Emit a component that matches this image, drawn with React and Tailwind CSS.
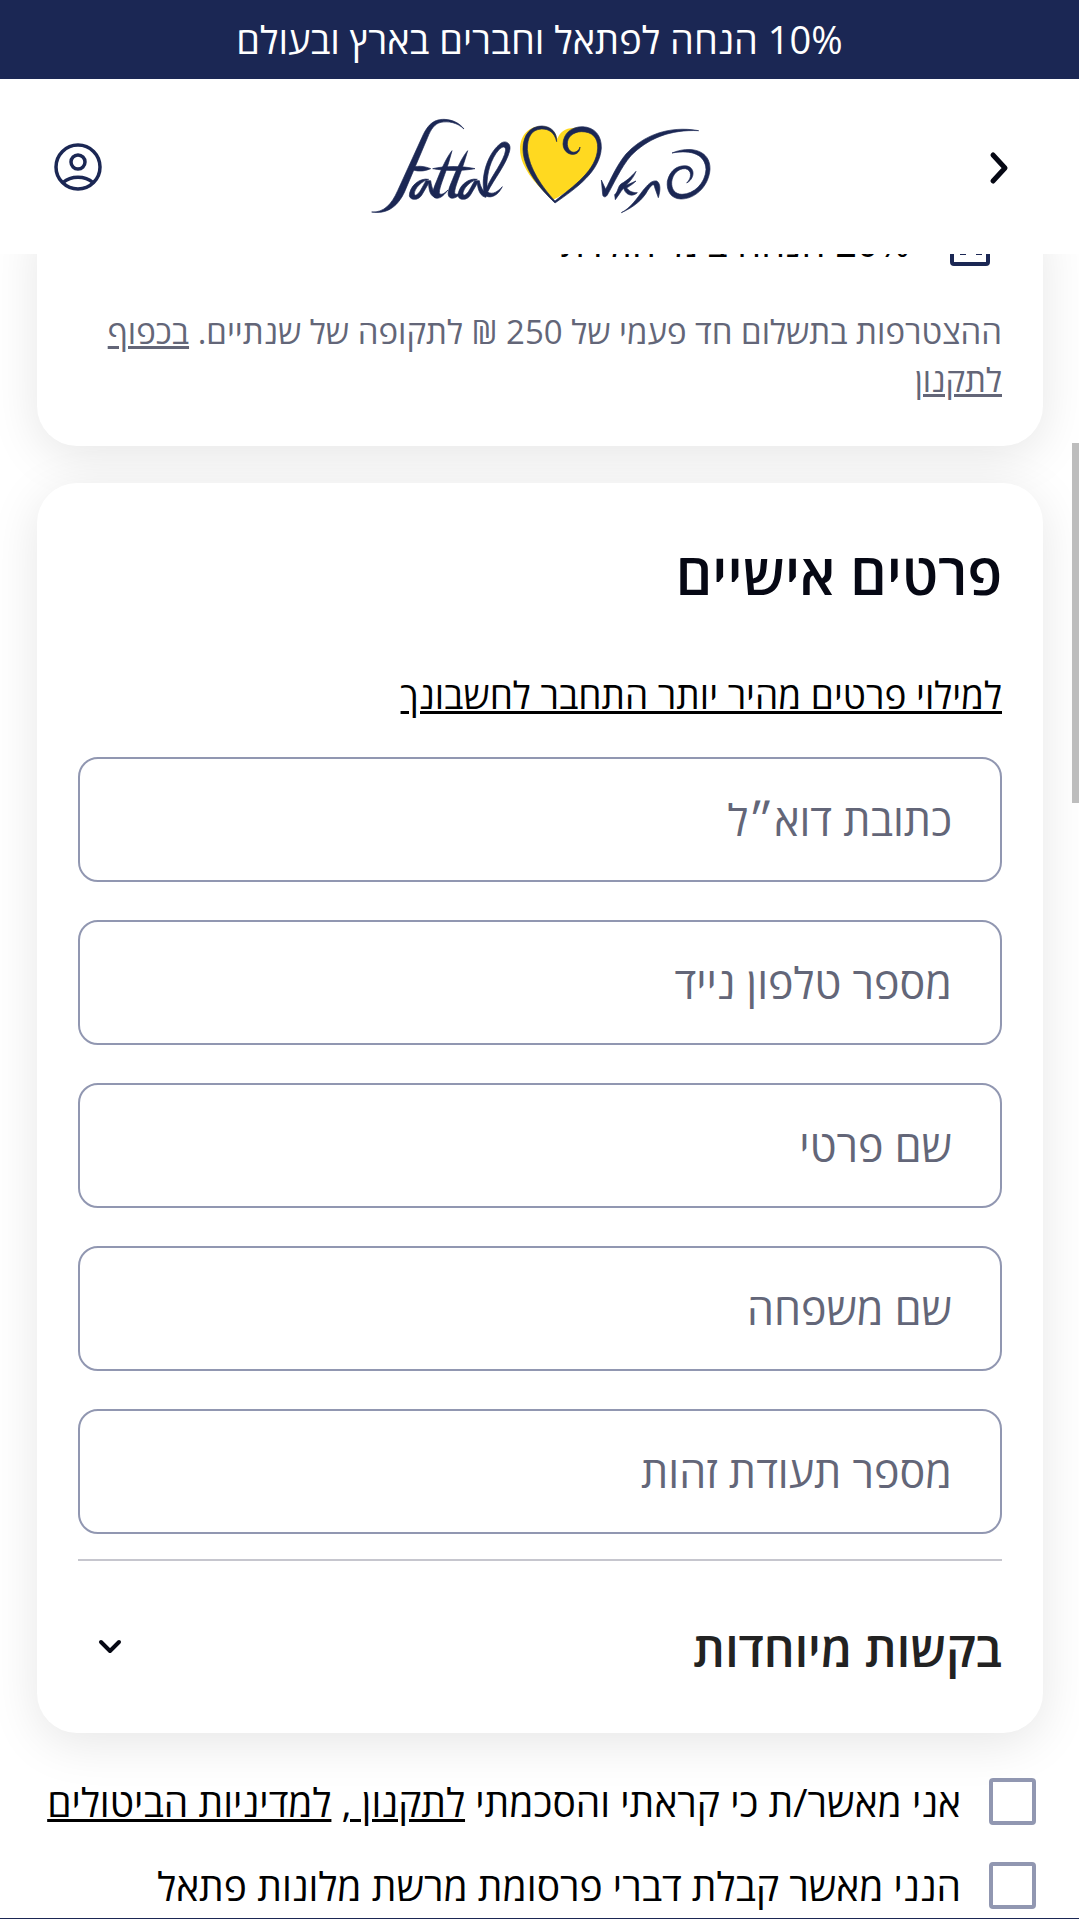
import React from "react";

const fields = [
  { id: "email", label: "כתובת דוא״ל", type: "email" },
  { id: "phone", label: "מספר טלפון נייד", type: "tel" },
  { id: "first", label: "שם פרטי", type: "text" },
  { id: "last", label: "שם משפחה", type: "text" },
  { id: "idnum", label: "מספר תעודת זהות", type: "text" },
];

function Logo() {
  return (
    <svg viewBox="0 0 1080 390" className="w-[360px]" role="img" aria-label="Fattal">
      <path
        fill="#ffd920"
        d="M578 300C536 262 480 205 480 148C480 104 508 78 545 78C572 79 588 96 592 116C600 97 615 84 640 84C692 76 720 102 718 146C714 206 652 262 578 300Z"
      />
      <g fill="#1b2754" stroke="#1b2754" strokeWidth="2" strokeLinejoin="round">
        <path d="M312 87C290 67 266 63 243 67C224 71 213 87 203 112L134 275C112 323 78 343 35 336C70 338 94 315 113 272L186 112C205 68 226 58 252 58C278 59 298 69 312 87Z" />
        <path d="M150 206C170 195 192 198 212 206C192 215 170 216 150 206Z" />
        <path d="M218 206C255 197 310 198 345 206C310 213 255 213 218 206Z" />
        <path d="M276 152C260 172 245 205 232 238C222 262 212 285 224 293C238 299 250 288 264 270C250 284 240 286 238 278C238 262 252 232 262 200C268 182 272 166 276 152Z" />
        <path d="M323 152C306 172 291 205 278 238C268 262 258 285 270 293C284 299 296 288 310 270C296 284 286 286 284 278C284 262 298 232 308 200C314 182 319 166 323 152Z" />
        <path d="M206 238C178 232 148 260 148 288C152 302 176 302 186 284L206 250C206 272 212 290 226 292L226 280C216 270 214 252 212 242L198 242C188 258 178 284 166 286C156 282 172 248 206 238Z" />
        <path d="M352 238C324 232 294 260 294 288C298 302 322 302 332 284L352 250C354 272 362 290 378 292L380 280C364 270 360 252 358 242L344 242C334 258 324 284 312 286C302 282 318 248 352 238Z" />
        <path d="M372 276C362 225 385 155 425 128C442 120 454 134 449 152C440 192 400 240 383 276C398 286 414 274 427 260C414 286 394 296 378 288C374 286 372 282 372 276ZM381 262C394 228 432 184 437 150C436 136 426 140 416 150C392 178 380 220 381 262Z" />
        <path d="M590 125C584 98 566 86 544 87C514 89 502 112 502 148C506 204 548 264 585 303C640 258 710 212 713 144C714 112 696 95 664 95C638 96 621 112 622 133C625 164 654 162 660 141C660 174 610 170 609 132C610 100 634 80 668 80C704 82 725 106 724 144C720 214 650 264 585 309C536 262 490 206 489 148C489 104 512 78 546 78C574 79 591 97 590 125Z" />
        <path d="M1016 92C930 88 862 116 812 168C782 204 764 246 742 285C736 294 728 291 728 283L724 240L737 268C752 238 770 196 798 162C850 106 926 76 1016 92Z" />
        <path d="M828 214C818 242 792 258 778 282L766 299L764 284C776 274 772 258 786 250C800 242 812 232 828 214Z" />
        <path d="M828 243C814 256 806 260 800 264C810 276 820 278 832 278C820 290 800 288 792 268L788 258C800 258 814 248 828 243Z" />
        <path d="M784 338C820 322 848 300 864 270C880 248 882 252 884 262L895 293C902 270 902 250 890 243C874 240 862 256 850 270C830 296 812 324 784 338Z" />
        <path d="M936 159C990 136 1052 150 1050 208C1046 262 1002 298 962 297C932 296 919 272 922 244C930 208 956 194 982 198C1008 206 1002 238 980 249C996 234 996 210 976 206C954 205 938 222 935 246C934 268 944 282 966 283C1002 282 1036 250 1038 208C1036 164 996 148 936 159Z" />
      </g>
    </svg>
  );
}

function Consent({ id, children }) {
  return (
    <div className="flex items-center gap-7">
      <input
        id={id}
        type="checkbox"
        className="h-[47px] w-[47px] shrink-0 appearance-none rounded border-4 border-[#9197b1] bg-transparent checked:bg-[#1b2754]"
      />
      <label htmlFor={id} className="whitespace-nowrap text-[39px] leading-[47px] text-black">
        {children}
      </label>
    </div>
  );
}

export default function App() {
  return (
    <div
      dir="rtl"
      lang="he"
      className="relative flex h-screen flex-col overflow-hidden bg-white font-['Open_Sans','Noto_Sans',sans-serif]"
    >
      <header className="relative z-10 shrink-0 bg-white">
        <p className="flex h-[79px] items-center justify-center bg-[#1b2754] text-[38px] text-white">
          10% הנחה לפתאל וחברים בארץ ובעולם
        </p>
        <div className="flex h-[175px] items-center justify-between px-[54px]">
          <button type="button" aria-label="חזרה" className="flex h-12 w-12 items-center justify-center">
            <svg viewBox="0 0 48 48" className="h-12 w-12" fill="none" stroke="#060814" strokeWidth="5" strokeLinecap="round" strokeLinejoin="round">
              <path d="M16 12L28 25L16 38" />
            </svg>
          </button>
          <a href="#home" className="pb-1">
            <Logo />
          </a>
          <button type="button" aria-label="אזור אישי" className="h-12 w-12">
            <svg viewBox="0 0 48 48" className="h-12 w-12" fill="none" stroke="#1b2754" strokeWidth="3.5">
              <circle cx="24" cy="24" r="22" />
              <circle cx="24" cy="19" r="7" />
              <path d="M9 39.5C17 32.5 31 32.5 39 39.5" />
            </svg>
          </button>
        </div>
      </header>

      <main className="-mt-9 min-h-0 flex-1">
        <section className="ml-[37px] mr-9 rounded-b-[40px] bg-white px-[41px] pb-[42px] shadow-[0_10px_50px_rgba(0,0,0,0.1)]">
          <div className="flex h-[48px] items-end gap-10 pr-3">
            <svg viewBox="0 0 40 42" className="h-[42px] w-10" fill="none" stroke="#1b2754" strokeWidth="4">
              <rect x="2" y="2" width="36" height="38" rx="2" />
              <path d="M10 29h6M26 29h6" />
            </svg>
            <p className="text-[38px] leading-[48px] text-black">20% הנחה בימי הולדת</p>
          </div>
          <p className="mt-[42px] text-[33px] leading-[48px] text-[#636678]">
            ההצטרפות בתשלום חד פעמי של 250 ₪ לתקופה של שנתיים.{" "}
            <a href="#terms" className="underline">בכפוף לתקנון</a>
          </p>
        </section>

        <section className="ml-[37px] mr-9 mt-[37px] rounded-[40px] bg-white px-[41px] shadow-[0_10px_50px_rgba(0,0,0,0.1)]">
          <h2 className="pt-[54px] text-[57px] font-semibold leading-[72px] text-[#060814]">פרטים אישיים</h2>
          <a href="#login" className="mt-[62px] block text-[37px] leading-[48px] text-black underline">
            למילוי פרטים מהיר יותר התחבר לחשבונך
          </a>
          <form className="mt-[38px] flex flex-col gap-[38px]">
            {fields.map((f) => (
              <input
                key={f.id}
                id={f.id}
                type={f.type}
                dir="rtl"
                aria-label={f.label}
                placeholder={f.label}
                className="h-[125px] w-full rounded-[20px] border-2 border-[#9197b1] bg-white px-12 text-right text-[43px] text-black placeholder:text-[#636678]"
              />
            ))}
          </form>
          <button
            type="button"
            className="mt-[25px] flex h-[174px] w-full items-center justify-between border-t-2 border-[#c6c6ce] pl-5 text-[48px] font-semibold text-[#222222]"
          >
            <span className="pt-1">בקשות מיוחדות</span>
            <svg viewBox="0 0 24 16" className="h-4 w-6" fill="none" stroke="#060814" strokeWidth="4" strokeLinecap="round" strokeLinejoin="round">
              <path d="M3 3L12 12L21 3" />
            </svg>
          </button>
        </section>

        <div className="mt-[45px] flex flex-col gap-[37px] px-[43px]">
          <Consent id="terms-ok">
            אני מאשר/ת כי קראתי והסכמתי <a href="#terms" className="underline">לתקנון ,</a>{" "}
            <a href="#cancel" className="underline">למדיניות הביטולים</a>
          </Consent>
          <Consent id="ads-ok">הנני מאשר קבלת דברי פרסומת מרשת מלונות פתאל</Consent>
        </div>
      </main>

      <footer className="absolute inset-x-0 bottom-0 z-10 border-t border-[#1b2754]" />
      <div className="absolute right-0 top-[443px] z-20 h-[360px] w-[7px] bg-[#bdbdbd]" />
    </div>
  );
}
